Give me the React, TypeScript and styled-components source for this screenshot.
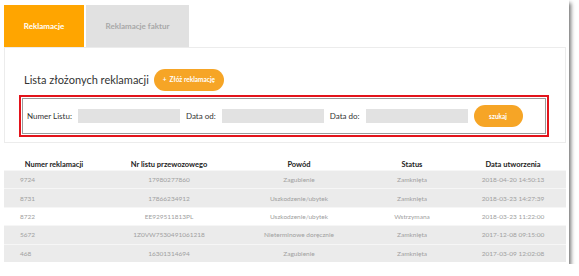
import React from 'react';
import styled, { createGlobalStyle } from 'styled-components';

const GlobalStyle = createGlobalStyle`
  html, body {
    margin: 0;
    padding: 0;
    background: #ffffff;
    font-family: Lato, 'Open Sans', sans-serif;
  }
`;

const Sheet = styled.div`
  width: 569px;
  height: 264px;
  background: #ffffff;
  box-shadow: 2px 3px 4px rgba(0, 0, 0, 0.55);
  padding: 5px 3px 0 4px;
  box-sizing: border-box;
  overflow: hidden;
`;

const Tabs = styled.div`
  display: flex;
  gap: 2px;
  height: 42px;
`;

const Tab = styled.div<{ active?: boolean }>`
  width: ${(p) => (p.active ? '80px' : '103px')};
  display: flex;
  align-items: center;
  justify-content: center;
  font-size: 8px;
  font-weight: bold;
  background: ${(p) => (p.active ? '#ffa500' : '#e1e1e1')};
  color: ${(p) => (p.active ? '#ffffff' : '#a8a8a8')};
`;

const Panel = styled.div`
  border: 1px solid #ececec;
  height: 96px;
  box-sizing: border-box;
  padding: 20px 0 0 15px;
`;

const TitleRow = styled.div`
  display: flex;
  align-items: center;
  gap: 5px;
  height: 23px;
  padding-left: 4px;
`;

const Title = styled.h2`
  margin: 0;
  font-size: 11px;
  font-weight: normal;
  color: #333333;
`;

const Pill = styled.button<{ w: number; h: number }>`
  width: ${(p) => p.w}px;
  height: ${(p) => p.h}px;
  border: none;
  border-radius: 12px;
  background: #f6a526;
  color: #ffffff;
  font-family: Lato, sans-serif;
  font-size: 6.5px;
  font-weight: bold;
  padding: 0;
`;

const SearchBox = styled.form`
  margin: 7px 0 0 2px;
  width: 524px;
  height: 36px;
  box-sizing: border-box;
  outline: 2px solid #e3131b;
  outline-offset: 1px;
  border: 1px solid #9a9a9a;
  display: flex;
  align-items: center;
  padding-left: 4px;
`;

const Label = styled.span`
  font-size: 8px;
  color: #333333;
  margin-right: 6px;
`;

const Field = styled.div`
  width: 102px;
  height: 14px;
  background: #e2e2e2;
  margin-right: 6px;
`;

const Table = styled.table`
  margin-top: 17px;
  width: 562px;
  border-collapse: collapse;
  font-size: 6.5px;
`;

const Th = styled.th`
  font-size: 7.5px;
  font-weight: bold;
  color: #222222;
  height: 10px;
  padding: 0;
  line-height: 10px;
`;

const Row = styled.tr<{ light?: boolean }>`
  background: ${(p) => (p.light ? '#ffffff' : '#ebebeb')};
  border-top: 1px solid #f6f6f6;
  height: 18.4px;
`;

const Td = styled.td<{ left?: boolean }>`
  color: #a0a0a0;
  text-align: ${(p) => (p.left ? 'left' : 'center')};
  padding: 0 0 0 ${(p) => (p.left ? '16px' : '0')};
`;

const rows = [
  ['9724', '17980277860', 'Zagubienie', 'Zamknięta', '2018-04-20 14:50:13'],
  ['8731', '17866234912', 'Uszkodzenie/ubytek', 'Zamknięta', '2018-03-23 14:27:39'],
  ['8722', 'EE929511813PL', 'Uszkodzenie/ubytek', 'Wstrzymana', '2018-03-23 11:22:00'],
  ['5672', '1Z0VW7530491061218', 'Nieterminowe doręcznie', 'Zamknięta', '2017-12-08 09:15:00'],
  ['468', '16301314694', 'Zagubienie', 'Zamknięta', '2017-03-09 12:02:08'],
];

const widths = [100, 130, 130, 96, 106];

const App = () => {
  return (
    <>
      <GlobalStyle />
      <Sheet>
        <Tabs>
          <Tab active>Reklamacje</Tab>
          <Tab>Reklamacje faktur</Tab>
        </Tabs>
        <Panel>
          <TitleRow>
            <Title>Lista złożonych reklamacji</Title>
            <Pill w={70} h={22}>+&nbsp;&nbsp;Złóż reklamację</Pill>
          </TitleRow>
          <SearchBox>
            <Label>Numer Listu:</Label>
            <Field />
            <Label>Data od:</Label>
            <Field />
            <Label>Data do:</Label>
            <Field />
            <Pill w={49} h={22}>szukaj</Pill>
          </SearchBox>
        </Panel>
        <Table>
          <colgroup>
            {widths.map((w, i) => (
              <col key={i} style={{ width: w }} />
            ))}
          </colgroup>
          <thead>
            <tr>
              <Th>Numer reklamacji</Th>
              <Th>Nr listu przewozowego</Th>
              <Th>Powód</Th>
              <Th>Status</Th>
              <Th>Data utworzenia</Th>
            </tr>
          </thead>
          <tbody>
            {rows.map((r, i) => (
              <Row key={r[0]} light={i === 2}>
                {r.map((c, j) => (
                  <Td key={j} left={j === 0}>
                    {c}
                  </Td>
                ))}
              </Row>
            ))}
          </tbody>
        </Table>
      </Sheet>
    </>
  );
};

export default App;
